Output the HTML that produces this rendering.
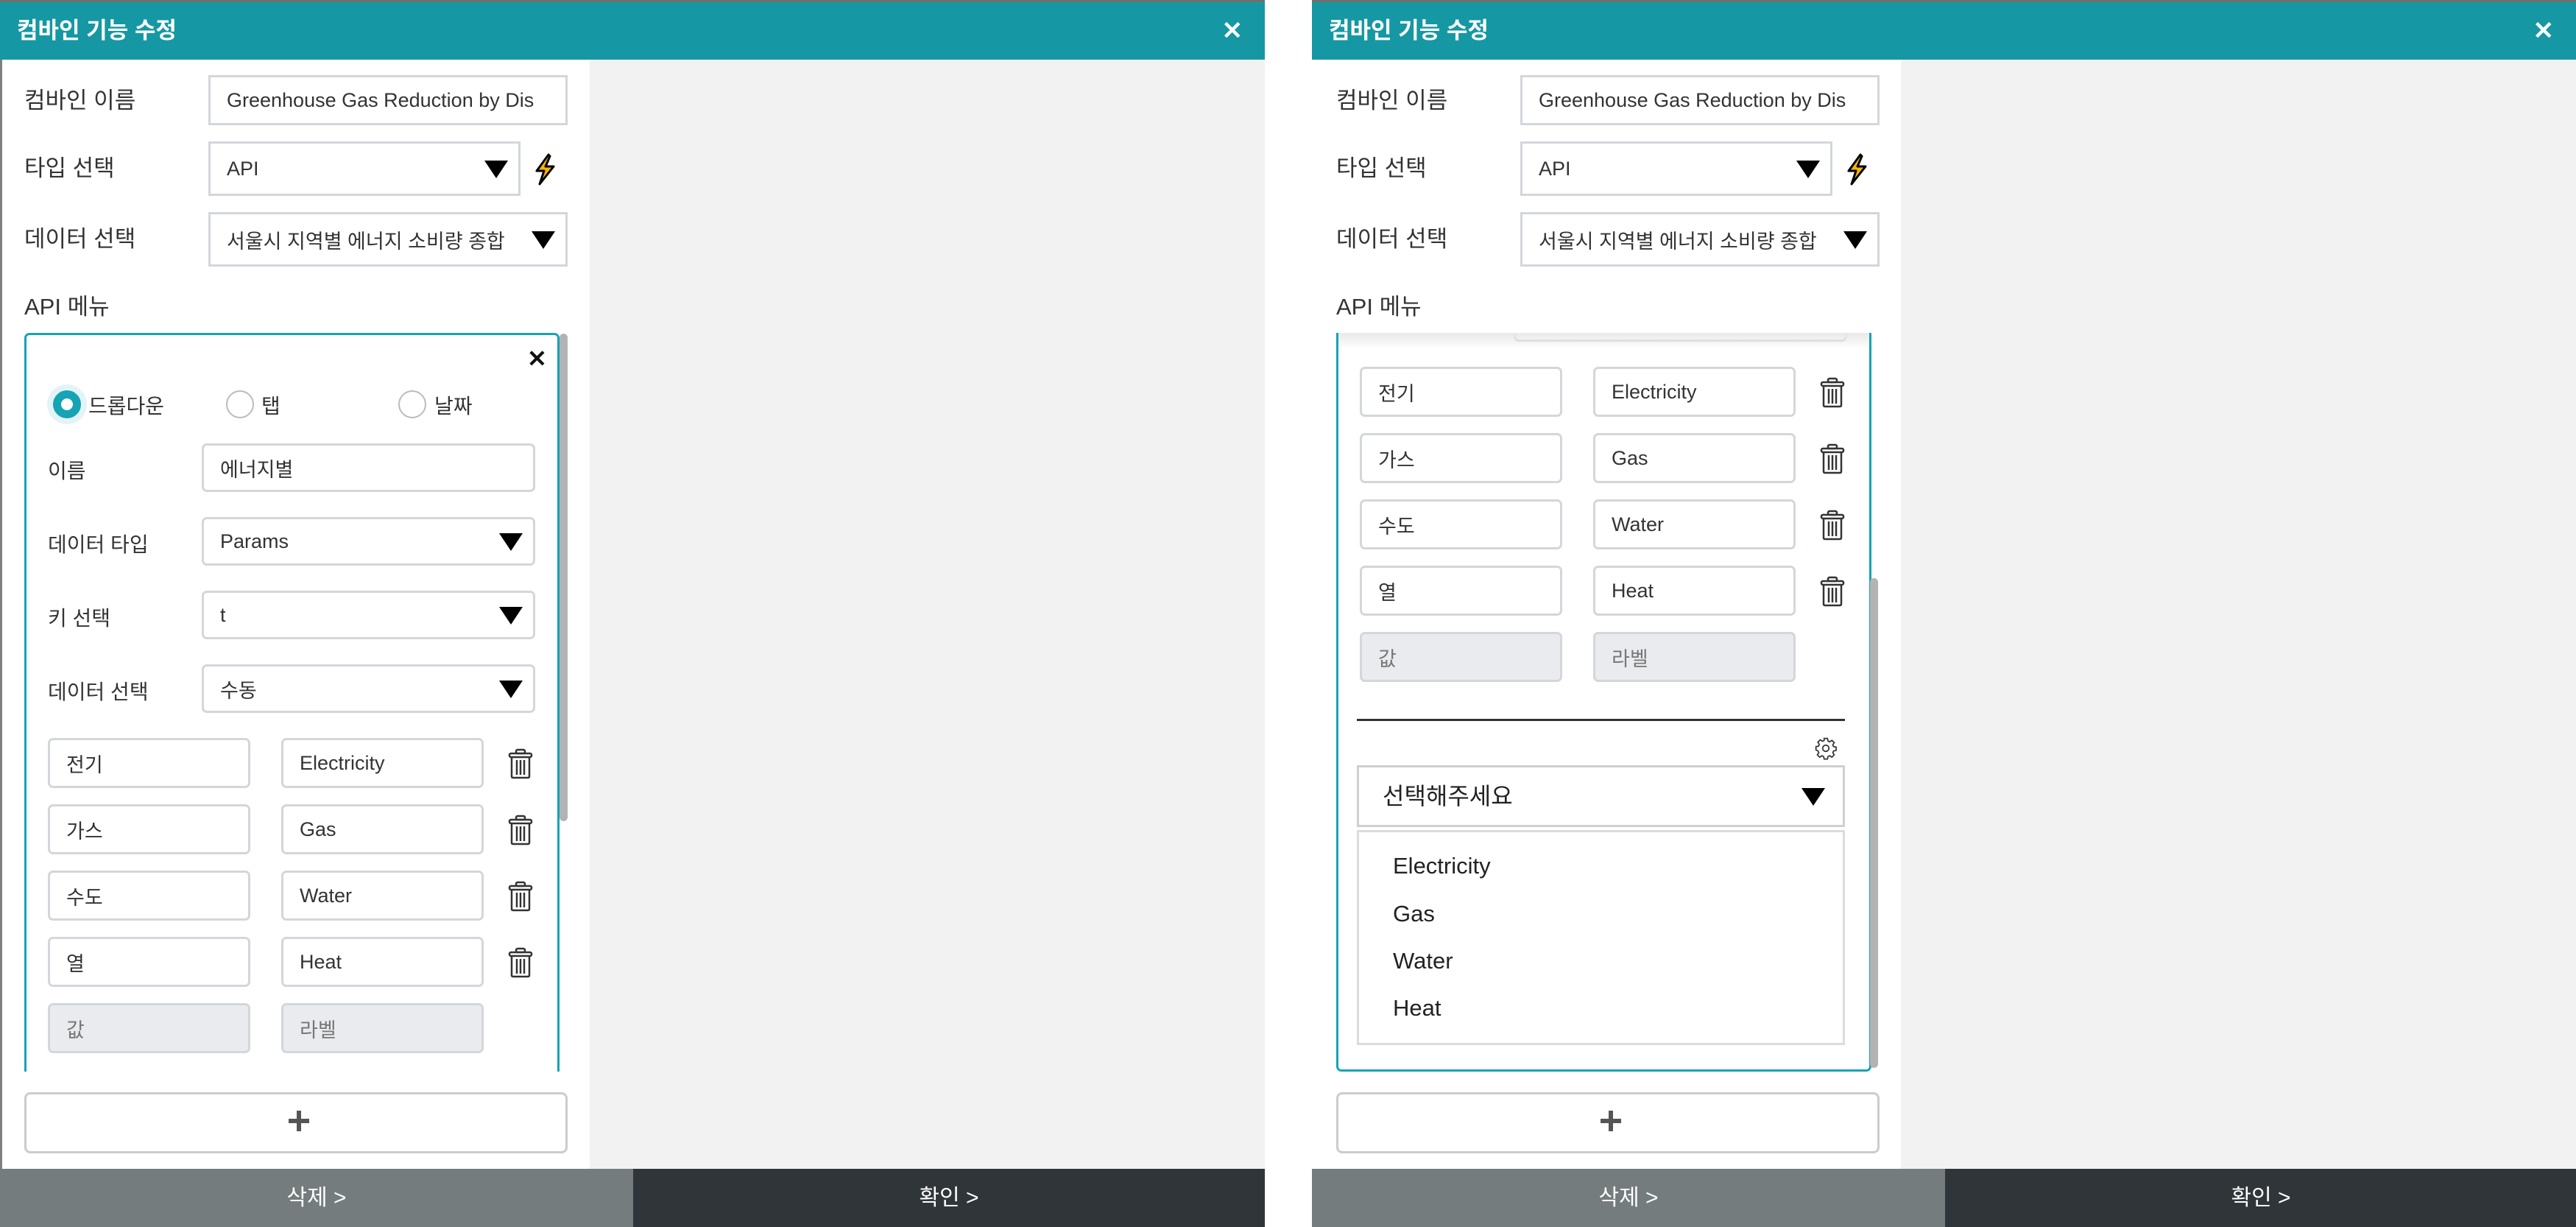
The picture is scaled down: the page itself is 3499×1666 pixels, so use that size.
<!DOCTYPE html>
<html><head><meta charset="utf-8">
<style>
*{box-sizing:border-box;margin:0;padding:0}
body{width:3499px;height:1666px;background:#fff;position:relative;overflow:hidden;font-family:"Liberation Sans","Noto Sans CJK KR",sans-serif;color:#333}
.a{position:absolute}
.panel{position:absolute;top:0;width:1718px;height:1666px;background:#f2f2f2;overflow:hidden}
.top{left:0;top:0;width:100%;height:4px;background:#6f6f6f}
.hdr{left:0;top:3px;width:100%;height:78px;background:#1598a3;color:#fff;font-weight:bold;font-size:31px;line-height:78px;padding-left:23px}
.cx{right:30px;top:0;font-size:34px;font-weight:bold;line-height:78px}
.content{left:0;top:81px;width:801px;height:1506px;background:#fff;border-left:3px solid #808080}
.lbl{font-size:31px;color:#333;line-height:40px}
.inp{background:#fff;border:3px solid #d3d6db;font-size:27px;color:#333;padding-left:22px;display:flex;align-items:center}
.tri{position:absolute;right:14px;top:50%;margin-top:-11px;width:0;height:0;border-left:16px solid transparent;border-right:16px solid transparent;border-top:24px solid #000}
.box{left:33px;top:452px;width:727px;height:1003px;border:3px solid #16a3b4;border-radius:7px;overflow:hidden;background:#fff}
.f{position:absolute;border:3px solid #d3d6db;border-radius:7px;background:#fff;font-size:27px;color:#333;padding-left:22px;display:flex;align-items:center}
.g{background:#e9ebee;color:#777}
.sb{width:11px;background:#b3b3b3;border-radius:6px}
.foot1{left:0;top:1587px;width:860px;height:79px;background:#757c7e;color:#fff;font-size:30px;text-align:center;line-height:79px}
.foot2{left:860px;top:1587px;width:858px;height:79px;background:#2f3538;color:#fff;font-size:30px;text-align:center;line-height:79px}
.add{left:33px;top:1483px;width:738px;height:83px;border:3px solid #ccc;border-radius:8px;background:#fff}
.rad{position:absolute;width:38px;height:38px;border-radius:50%;border:2px solid #bbb;background:#fff}
.item{position:absolute;left:112px;font-size:31px;color:#222}
</style></head><body>

<!-- LEFT PANEL -->
<div class="panel" style="left:0">
  <div class="a top"></div>
  <div class="a hdr">컴바인 기능 수정<span class="a cx">✕</span></div>
  <div class="a content"></div>
  <div class="a lbl" style="left:33px;top:117px">컴바인 이름</div>
  <div class="a inp" style="left:283px;top:102px;width:488px;height:68px;overflow:hidden;white-space:nowrap">Greenhouse Gas Reduction by Dis</div>
  <div class="a lbl" style="left:33px;top:209px">타입 선택</div>
  <div class="a inp" style="left:283px;top:192px;width:424px;height:74px">API<span class="tri"></span></div>
  <svg class="a" style="left:725px;top:208px" width="30" height="44" viewBox="0 0 30 44"><path d="M20 2 L4 24 L14 24 L8 42 L27 18 L16 18 L22 4 Z" fill="#f7b500" stroke="#000" stroke-width="3" stroke-linejoin="round"/></svg>
  <div class="a lbl" style="left:33px;top:305px">데이터 선택</div>
  <div class="a inp" style="left:283px;top:288px;width:488px;height:74px">서울시 지역별 에너지 소비량 종합<span class="tri"></span></div>
  <div class="a lbl" style="left:33px;top:397px">API 메뉴</div>

  <div class="a box" style="border-bottom:none;border-radius:7px 7px 0 0">
    <div class="a" style="left:0;top:0;width:100%;height:100%;transform:translate(-36px,-455px)">
      <div class="a" style="left:716px;top:468px;font-size:32px;font-weight:bold;color:#111">✕</div>
      <div class="a" style="left:64px;top:522px;width:54px;height:54px;border-radius:50%;background:#e3f4f6"></div>
      <div class="rad" style="left:72px;top:530px;border:11px solid #16a3b4"></div>
      <div class="a" style="left:120px;top:530px;font-size:28px">드롭다운</div>
      <div class="rad" style="left:307px;top:530px"></div>
      <div class="a" style="left:355px;top:530px;font-size:28px">탭</div>
      <div class="rad" style="left:541px;top:530px"></div>
      <div class="a" style="left:590px;top:530px;font-size:28px">날짜</div>

      <div class="a" style="left:65px;top:618px;font-size:28px">이름</div>
      <div class="f" style="left:274px;top:602px;width:453px;height:66px">에너지별</div>
      <div class="a" style="left:65px;top:718px;font-size:28px">데이터 타입</div>
      <div class="f" style="left:274px;top:702px;width:453px;height:66px">Params<span class="tri"></span></div>
      <div class="a" style="left:65px;top:818px;font-size:28px">키 선택</div>
      <div class="f" style="left:274px;top:802px;width:453px;height:66px">t<span class="tri"></span></div>
      <div class="a" style="left:65px;top:918px;font-size:28px">데이터 선택</div>
      <div class="f" style="left:274px;top:902px;width:453px;height:66px">수동<span class="tri"></span></div>

      <div class="f" style="left:65px;top:1002px;width:275px;height:68px">전기</div>
      <div class="f" style="left:382px;top:1002px;width:275px;height:68px">Electricity</div>
      <div class="f" style="left:65px;top:1092px;width:275px;height:68px">가스</div>
      <div class="f" style="left:382px;top:1092px;width:275px;height:68px">Gas</div>
      <div class="f" style="left:65px;top:1182px;width:275px;height:68px">수도</div>
      <div class="f" style="left:382px;top:1182px;width:275px;height:68px">Water</div>
      <div class="f" style="left:65px;top:1272px;width:275px;height:68px">열</div>
      <div class="f" style="left:382px;top:1272px;width:275px;height:68px">Heat</div>
      <div class="f g" style="left:65px;top:1362px;width:275px;height:68px">값</div>
      <div class="f g" style="left:382px;top:1362px;width:275px;height:68px">라벨</div>
      <svg class="a" style="left:690px;top:1016px" width="34" height="42" viewBox="0 0 34 42"><g fill="none" stroke="#333" stroke-width="2.5"><rect x="11" y="2" width="12" height="5" rx="2"/><rect x="2" y="7" width="30" height="5" rx="2"/><path d="M5 12 L5 38 Q5 40 7 40 L27 40 Q29 40 29 38 L29 12"/><path d="M12 16V36M17 16V36M22 16V36"/></g></svg>
      <svg class="a" style="left:690px;top:1106px" width="34" height="42" viewBox="0 0 34 42"><g fill="none" stroke="#333" stroke-width="2.5"><rect x="11" y="2" width="12" height="5" rx="2"/><rect x="2" y="7" width="30" height="5" rx="2"/><path d="M5 12 L5 38 Q5 40 7 40 L27 40 Q29 40 29 38 L29 12"/><path d="M12 16V36M17 16V36M22 16V36"/></g></svg>
      <svg class="a" style="left:690px;top:1196px" width="34" height="42" viewBox="0 0 34 42"><g fill="none" stroke="#333" stroke-width="2.5"><rect x="11" y="2" width="12" height="5" rx="2"/><rect x="2" y="7" width="30" height="5" rx="2"/><path d="M5 12 L5 38 Q5 40 7 40 L27 40 Q29 40 29 38 L29 12"/><path d="M12 16V36M17 16V36M22 16V36"/></g></svg>
      <svg class="a" style="left:690px;top:1286px" width="34" height="42" viewBox="0 0 34 42"><g fill="none" stroke="#333" stroke-width="2.5"><rect x="11" y="2" width="12" height="5" rx="2"/><rect x="2" y="7" width="30" height="5" rx="2"/><path d="M5 12 L5 38 Q5 40 7 40 L27 40 Q29 40 29 38 L29 12"/><path d="M12 16V36M17 16V36M22 16V36"/></g></svg>
    </div>
  </div>
  <div class="a sb" style="left:760px;top:453px;height:662px"></div>

  <div class="a add"><div class="a" style="left:356px;top:33px;width:28px;height:6px;background:#555"></div><div class="a" style="left:367px;top:22px;width:6px;height:28px;background:#555"></div></div>
  <div class="a foot1">삭제 &gt;</div>
  <div class="a foot2">확인 &gt;</div>
</div>

<!-- RIGHT PANEL -->
<div class="panel" style="left:1782px;width:1717px">
  <div class="a top"></div>
  <div class="a hdr">컴바인 기능 수정<span class="a cx">✕</span></div>
  <div class="a content" style="border-left:none;width:800px"></div>
  <div class="a lbl" style="left:33px;top:117px">컴바인 이름</div>
  <div class="a inp" style="left:283px;top:102px;width:488px;height:68px;overflow:hidden;white-space:nowrap">Greenhouse Gas Reduction by Dis</div>
  <div class="a lbl" style="left:33px;top:209px">타입 선택</div>
  <div class="a inp" style="left:283px;top:192px;width:424px;height:74px">API<span class="tri"></span></div>
  <svg class="a" style="left:725px;top:208px" width="30" height="44" viewBox="0 0 30 44"><path d="M20 2 L4 24 L14 24 L8 42 L27 18 L16 18 L22 4 Z" fill="#f7b500" stroke="#000" stroke-width="3" stroke-linejoin="round"/></svg>
  <div class="a lbl" style="left:33px;top:305px">데이터 선택</div>
  <div class="a inp" style="left:283px;top:288px;width:488px;height:74px">서울시 지역별 에너지 소비량 종합<span class="tri"></span></div>
  <div class="a lbl" style="left:33px;top:397px">API 메뉴</div>

  <div class="a box" style="border-top:none;border-radius:0 0 7px 7px">
    <div class="a" style="left:0;top:0;width:100%;height:100%;transform:translate(-36px,-452px)">
      <div class="f" style="left:274px;top:398px;width:453px;height:66px"></div>
      <div class="f" style="left:65px;top:498px;width:275px;height:68px">전기</div>
      <div class="f" style="left:382px;top:498px;width:275px;height:68px">Electricity</div>
      <div class="f" style="left:65px;top:588px;width:275px;height:68px">가스</div>
      <div class="f" style="left:382px;top:588px;width:275px;height:68px">Gas</div>
      <div class="f" style="left:65px;top:678px;width:275px;height:68px">수도</div>
      <div class="f" style="left:382px;top:678px;width:275px;height:68px">Water</div>
      <div class="f" style="left:65px;top:768px;width:275px;height:68px">열</div>
      <div class="f" style="left:382px;top:768px;width:275px;height:68px">Heat</div>
      <div class="f g" style="left:65px;top:858px;width:275px;height:68px">값</div>
      <div class="f g" style="left:382px;top:858px;width:275px;height:68px">라벨</div>
      <svg class="a" style="left:690px;top:512px" width="34" height="42" viewBox="0 0 34 42"><g fill="none" stroke="#333" stroke-width="2.5"><rect x="11" y="2" width="12" height="5" rx="2"/><rect x="2" y="7" width="30" height="5" rx="2"/><path d="M5 12 L5 38 Q5 40 7 40 L27 40 Q29 40 29 38 L29 12"/><path d="M12 16V36M17 16V36M22 16V36"/></g></svg>
      <svg class="a" style="left:690px;top:602px" width="34" height="42" viewBox="0 0 34 42"><g fill="none" stroke="#333" stroke-width="2.5"><rect x="11" y="2" width="12" height="5" rx="2"/><rect x="2" y="7" width="30" height="5" rx="2"/><path d="M5 12 L5 38 Q5 40 7 40 L27 40 Q29 40 29 38 L29 12"/><path d="M12 16V36M17 16V36M22 16V36"/></g></svg>
      <svg class="a" style="left:690px;top:692px" width="34" height="42" viewBox="0 0 34 42"><g fill="none" stroke="#333" stroke-width="2.5"><rect x="11" y="2" width="12" height="5" rx="2"/><rect x="2" y="7" width="30" height="5" rx="2"/><path d="M5 12 L5 38 Q5 40 7 40 L27 40 Q29 40 29 38 L29 12"/><path d="M12 16V36M17 16V36M22 16V36"/></g></svg>
      <svg class="a" style="left:690px;top:782px" width="34" height="42" viewBox="0 0 34 42"><g fill="none" stroke="#333" stroke-width="2.5"><rect x="11" y="2" width="12" height="5" rx="2"/><rect x="2" y="7" width="30" height="5" rx="2"/><path d="M5 12 L5 38 Q5 40 7 40 L27 40 Q29 40 29 38 L29 12"/><path d="M12 16V36M17 16V36M22 16V36"/></g></svg>
      <div class="a" style="left:61px;top:976px;width:663px;height:3px;background:#333"></div>
      <svg class="a" style="left:682px;top:1000px" width="32" height="32" viewBox="0 0 24 24"><g fill="none" stroke="#333" stroke-width="1.3"><circle cx="12" cy="12" r="3.2"/><path d="M10.3 2h3.4l.5 2.6 1.8.8 2.2-1.5 2.4 2.4-1.5 2.2.8 1.8 2.6.5v3.4l-2.6.5-.8 1.8 1.5 2.2-2.4 2.4-2.2-1.5-1.8.8-.5 2.6h-3.4l-.5-2.6-1.8-.8-2.2 1.5-2.4-2.4 1.5-2.2-.8-1.8L2 13.7v-3.4l2.6-.5.8-1.8-1.5-2.2 2.4-2.4 2.2 1.5 1.8-.8z"/></g></svg>
      <div class="a" style="left:61px;top:1039px;width:663px;height:84px;border:3px solid #cfcfcf;font-size:32px;color:#222;padding-left:32px;line-height:78px">선택해주세요<span class="tri" style="right:24px"></span></div>
      <div class="a" style="left:61px;top:1127px;width:663px;height:292px;border:3px solid #dcdcdc"></div>
      <div class="item" style="top:1158px;left:110px">Electricity</div>
      <div class="item" style="top:1223px;left:110px">Gas</div>
      <div class="item" style="top:1287px;left:110px">Water</div>
      <div class="item" style="top:1351px;left:110px">Heat</div>
    </div>
    <div class="a" style="left:0;top:0;width:100%;height:22px;background:linear-gradient(#e8e8e8,rgba(255,255,255,0))"></div>
  </div>
  <div class="a sb" style="left:758px;top:785px;height:665px"></div>

  <div class="a add"><div class="a" style="left:356px;top:33px;width:28px;height:6px;background:#555"></div><div class="a" style="left:367px;top:22px;width:6px;height:28px;background:#555"></div></div>
  <div class="a foot1">삭제 &gt;</div>
  <div class="a foot2">확인 &gt;</div>
</div>
</body></html>
